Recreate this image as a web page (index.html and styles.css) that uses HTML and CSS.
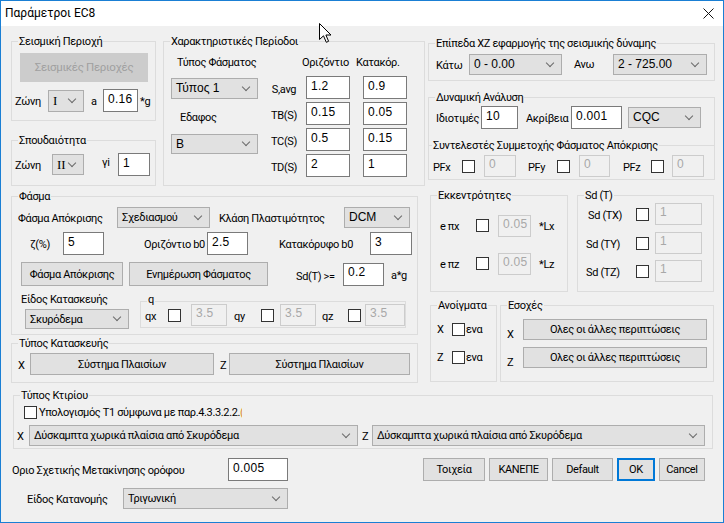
FILE: index.html
```html
<!DOCTYPE html>
<html lang="el">
<head>
<meta charset="utf-8">
<title>Παράμετροι EC8</title>
<link rel="stylesheet" href="styles.css">
</head>
<body>
<div class="win">
  <div class="titlebar">
    <span class="title">Παράμετροι EC8</span>
    <svg class="close" width="11" height="11" viewBox="0 0 11 11"><path d="M0.5 0.5L10.5 10.5M10.5 0.5L0.5 10.5" stroke="#111" stroke-width="1" fill="none"/></svg>
  </div>
  <div class="client">
    <div class="main">
      <div class="colL">
        <div class="rowTop">
          <div class="colA">
            <div class="grp g-seism">
              <span class="gt">Σεισμική Περιοχή</span>
              <div class="btn dis b-seism">Σεισμικές Περιοχές</div>
              <div class="row r-seism">
                <span class="lbl l-zoni">Ζώνη</span>
                <div class="cmb serif c-zoni1">I</div>
                <span class="lbl l-a">a</span>
                <div class="inp i-a">0.16</div>
                <span class="lbl l-g">*g</span>
              </div>
            </div>
            <div class="grp g-spoud">
              <span class="gt">Σπουδαιότητα</span>
              <div class="row r-spoud">
                <span class="lbl l-zoni2">Ζώνη</span>
                <div class="cmb serif c-zoni2">II</div>
                <span class="lbl l-gi">γi</span>
                <div class="inp i-gi">1</div>
              </div>
            </div>
          </div>
          <div class="grp g-char">
            <span class="gt">Χαρακτηριστικές Περίοδοι</span>
            <div class="char-left">
              <span class="lbl l-typf">Τύπος Φάσματος</span>
              <div class="cmb ms c-typ">Τύπος 1</div>
              <span class="lbl l-edaf">Εδαφος</span>
              <div class="cmb ms c-edaf">B</div>
            </div>
            <div class="char-right">
              <div class="char-head"><span class="h-or">Οριζόντιο</span><span class="h-kat">Κατακόρ.</span></div>
              <div class="char-row cr1"><span class="cl">S,avg</span><div class="inp ci1">1.2</div><div class="inp ci2">0.9</div></div>
              <div class="char-row"><span class="cl">TB(S)</span><div class="inp ci1">0.15</div><div class="inp ci2">0.05</div></div>
              <div class="char-row"><span class="cl">TC(S)</span><div class="inp ci1">0.5</div><div class="inp ci2">0.15</div></div>
              <div class="char-row"><span class="cl">TD(S)</span><div class="inp ci1">2</div><div class="inp ci2">1</div></div>
            </div>
          </div>
        </div>

        <div class="grp g-fasma">
          <span class="gt">Φάσμα</span>
          <div class="row f-r1">
            <span class="lbl l-fa">Φάσμα Απόκρισης</span>
            <div class="cmb c-sxed">Σχεδιασμού</div>
            <span class="lbl l-klasi">Κλάση Πλαστιμότητος</span>
            <div class="cmb ms c-dcm">DCM</div>
          </div>
          <div class="row f-r2">
            <span class="lbl l-zeta">ζ(%)</span>
            <div class="inp i-zeta">5</div>
            <span class="lbl l-orb">Οριζόντιο b0</span>
            <div class="inp i-orb">2.5</div>
            <span class="lbl l-katb">Κατακόρυφο b0</span>
            <div class="inp i-katb">3</div>
          </div>
          <div class="row f-r3">
            <div class="btn b-fa">Φάσμα Απόκρισης</div>
            <div class="btn b-enim">Ενημέρωση Φάσματος</div>
            <span class="lbl l-sd">Sd(T) &gt;=</span>
            <div class="inp i-sd">0.2</div>
            <span class="lbl l-ag">a*g</span>
          </div>
          <div class="f-r4">
            <div class="f-ek">
              <span class="lbl l-eidos">Είδος Κατασκευής</span>
              <div class="cmb c-skyr">Σκυρόδεμα</div>
            </div>
            <div class="grp g-q">
              <span class="gt gt-q">q</span>
              <div class="row q-row">
                <span class="lbl l-qx">qx</span>
                <span class="cb"></span>
                <div class="inp off i-q1">3.5</div>
                <span class="lbl l-qy">qy</span>
                <span class="cb"></span>
                <div class="inp off i-q2">3.5</div>
                <span class="lbl l-qz">qz</span>
                <span class="cb"></span>
                <div class="inp off i-q3">3.5</div>
              </div>
            </div>
          </div>
        </div>

        <div class="grp g-typkat">
          <span class="gt">Τύπος Κατασκευής</span>
          <div class="row tk-row">
            <span class="lbl l-tx">X</span>
            <div class="btn b-tk1">Σύστημα Πλαισίων</div>
            <span class="lbl l-tz">Z</span>
            <div class="btn b-tk2">Σύστημα Πλαισίων</div>
          </div>
        </div>
      </div>

      <div class="colR">
        <div class="grp g-epip">
          <span class="gt">Επίπεδα XZ εφαρμογής της σεισμικής δύναμης</span>
          <div class="row ep-row">
            <span class="lbl l-kato">Κάτω</span>
            <div class="cmb ms c-kato">0 - 0.00</div>
            <span class="lbl l-ano">Ανω</span>
            <div class="cmb ms c-ano">2 - 725.00</div>
          </div>
        </div>
        <div class="grp g-dyn">
          <span class="gt">Δυναμική Ανάλυση</span>
          <div class="row dy-r1">
            <span class="lbl l-idio">Ιδιοτιμές</span>
            <div class="inp i-idio">10</div>
            <span class="lbl l-akr">Ακρίβεια</span>
            <div class="inp i-akr">0.001</div>
            <div class="cmb ms c-cqc">CQC</div>
          </div>
          <div class="g-syn">
            <span class="gt gt-syn">Συντελεστές Συμμετοχής Φάσματος Απόκρισης</span>
            <div class="row pf-row">
              <span class="lbl l-pfx">PFx</span>
              <span class="cb"></span>
              <div class="inp off i-pf1">0</div>
              <span class="lbl l-pfy">PFy</span>
              <span class="cb"></span>
              <div class="inp off i-pf2">0</div>
              <span class="lbl l-pfz">PFz</span>
              <span class="cb"></span>
              <div class="inp off i-pf3">0</div>
            </div>
          </div>
        </div>

        <div class="rowEcc">
          <div class="grp g-ecc">
            <span class="gt">Εκκεντρότητες</span>
            <div class="row ec-r1">
              <span class="lbl l-ep">e πx</span>
              <span class="cb"></span>
              <div class="inp off i-ec">0.05</div>
              <span class="lbl l-lx">*Lx</span>
            </div>
            <div class="row ec-r2">
              <span class="lbl l-ep">e πz</span>
              <span class="cb"></span>
              <div class="inp off i-ec">0.05</div>
              <span class="lbl l-lx">*Lz</span>
            </div>
          </div>
          <div class="grp g-sd">
            <span class="gt">Sd (T)</span>
            <div class="row sd-r sd-r1">
              <span class="lbl l-sdt l-sdx">Sd (TX)</span>
              <span class="cb"></span>
              <div class="inp off i-sdt">1</div>
            </div>
            <div class="row sd-r sd-r2">
              <span class="lbl l-sdt">Sd (TY)</span>
              <span class="cb"></span>
              <div class="inp off i-sdt">1</div>
            </div>
            <div class="row sd-r sd-r3">
              <span class="lbl l-sdt">Sd (TZ)</span>
              <span class="cb"></span>
              <div class="inp off i-sdt">1</div>
            </div>
          </div>
        </div>

        <div class="rowAn">
          <div class="grp g-anoig">
            <span class="gt">Ανοίγματα</span>
            <div class="row an-r1">
              <span class="lbl l-an">X</span>
              <span class="cb"></span>
              <span class="lbl l-ena">ενα</span>
            </div>
            <div class="row an-r2">
              <span class="lbl l-an">Z</span>
              <span class="cb"></span>
              <span class="lbl l-ena">ενα</span>
            </div>
          </div>
          <div class="grp g-esox">
            <span class="gt">Εσοχές</span>
            <div class="row es-r1">
              <span class="lbl l-es">X</span>
              <div class="btn b-es">Ολες οι άλλες περιπτώσεις</div>
            </div>
            <div class="row es-r2">
              <span class="lbl l-es">Z</span>
              <div class="btn b-es">Ολες οι άλλες περιπτώσεις</div>
            </div>
          </div>
        </div>
      </div>
    </div>

    <div class="grp g-ktir">
      <span class="gt">Τύπος Κτιρίου</span>
      <div class="row kt-r1">
        <span class="cb cb-kt"></span>
        <span class="lbl l-t1">Υπολογισμός Τ1 σύμφωνα με παρ.4.3.3.2.2.<span class="clip">(</span></span>
      </div>
      <div class="row kt-r2">
        <span class="lbl l-kx">X</span>
        <div class="cmb c-kt1">Δύσκαμπτα χωρικά πλαίσια από Σκυρόδεμα</div>
        <span class="lbl l-kz">Z</span>
        <div class="cmb c-kt2">Δύσκαμπτα χωρικά πλαίσια από Σκυρόδεμα</div>
      </div>
    </div>

    <div class="bottom">
      <div class="bl">
        <div class="row bl-r1">
          <span class="lbl l-orio">Οριο Σχετικής Μετακίνησης ορόφου</span>
          <div class="inp i-orio">0.005</div>
        </div>
        <div class="row bl-r2">
          <span class="lbl l-katan">Είδος Κατανομής</span>
          <div class="cmb c-katan">Τριγωνική</div>
        </div>
      </div>
      <div class="btns">
        <div class="btn b-toix">Τοιχεία</div>
        <div class="btn b-kan">ΚΑΝΕΠΕ</div>
        <div class="btn b-def">Default</div>
        <div class="btn b-ok">OK</div>
        <div class="btn b-can">Cancel</div>
      </div>
    </div>
  </div>
  <svg class="cursor" width="14" height="21" viewBox="0 0 14 21"><path d="M0.5 0.5L0.5 16.5L4.5 12.8L7.3 19.3L9.6 18.3L6.9 12L12 12Z" fill="#fff" stroke="#000" stroke-width="1" stroke-linejoin="miter"/></svg>
</div>
</body>
</html>
```

FILE: styles.css
```css
* { box-sizing: border-box; margin: 0; padding: 0; }
body { margin: 0; background: #fff; font-family: Roboto, "Noto Sans", sans-serif; font-size: 11px; letter-spacing: -0.35px; line-height: 15px; color: #000; }

.win { position: relative; width: 724px; height: 523px; border: 1px solid #1a7fd4; background: #f0f0f0; overflow: hidden; }
.titlebar { height: 25px; background: #fff; display: flex; align-items: center; padding-left: 4px; }
.title { font-size: 12px; letter-spacing: 0; color: #000; }
.close { margin-left: auto; margin-right: 9px; }
.client { height: 496px; }
.cursor { position: absolute; left: 318px; top: 22px; }

/* generic controls */
.row { display: flex; align-items: center; }
.row > *, .char-left > *, .char-right > * { flex: none; }
.lbl { white-space: nowrap; padding-top: 2px; }
.grp { position: relative; border: 1px solid #dcdcdc; flex: none; }
.gt { position: absolute; top: -8px; left: 6px; padding: 0 1px; background: #f0f0f0; white-space: nowrap; line-height: 15px; }
.btn { display: flex; align-items: center; justify-content: center; border: 1px solid #adadad; background: #e1e1e1; white-space: nowrap; flex: none; }
.btn.dis { background: #cccccc; border-color: #cccccc; color: #a0a0a0; }
.cmb { display: flex; align-items: center; height: 21px; border: 1px solid #adadad; background: #e1e1e1; padding-left: 4px; white-space: nowrap; flex: none; }
.cmb::after { content: ""; flex: none; width: 5px; height: 5px; border-right: 1px solid #6a6a6a; border-bottom: 1px solid #6a6a6a; transform: rotate(45deg); margin: -4px 8px 0 auto; }
.ms { font-family: "Liberation Sans", Arial, sans-serif; font-size: 12px; letter-spacing: 0; }
.serif { font-family: "Liberation Serif", serif; font-size: 13px; letter-spacing: 0; }
.inp { display: flex; align-items: center; height: 23px; border: 1px solid #7a7a7a; background: #fff; padding: 0 0 3px 4px; font-family: "Liberation Sans", Arial, sans-serif; font-size: 12px; letter-spacing: 0.3px; flex: none; }
.inp.off { border-color: #cccccc; background: #f0f0f0; color: #a8a8a8; height: 22px; }
.cb { display: block; width: 13px; height: 13px; border: 1px solid #333; background: #fff; flex: none; }

/* layout */
.main { display: flex; align-items: flex-start; }
.colL { margin: 15px 0 0 10px; width: 414px; }
.rowTop { display: flex; align-items: flex-start; }
.colA { width: 145px; }
.colR { margin: 17px 0 0 3px; width: 287px; }

/* Σεισμική Περιοχή */
.g-seism { width: 145px; height: 80px; }
.b-seism { width: 128px; height: 29px; margin: 11px 0 0 8px; font-size: 11.5px; }
.r-seism { margin-top: 7px; height: 23px; }
.l-zoni { margin-left: 3px; width: 33px; }
.c-zoni1 { width: 36px; height: 22px; }
.l-a { margin-left: 7px; width: 12px; }
.i-a { width: 35px; }
.l-g { margin-left: 2px; }

/* Σπουδαιότητα */
.g-spoud { width: 145px; height: 46px; margin-top: 19px; }
.r-spoud { margin-top: 12px; height: 23px; }
.l-zoni2 { margin-left: 3px; width: 37px; }
.c-zoni2 { width: 32px; }
.l-gi { margin-left: 18px; width: 16px; margin-top: -6px; }
.i-gi { width: 32px; }

/* Χαρακτηριστικές Περίοδοι */
.g-char { width: 262px; height: 145px; margin-left: 7px; display: flex; align-items: flex-start; }
.char-left { display: flex; flex-direction: column; margin-left: 7px; width: 87px; }
.l-typf { margin-top: 13px; padding: 0 0 0 6px; }
.c-typ { margin-top: 8px; }
.l-edaf { margin-top: 11px; padding: 0 0 0 9px; }
.c-edaf { margin-top: 9px; height: 20px; }
.char-right { display: flex; flex-direction: column; margin-left: 7px; width: 142px; }
.char-head { display: flex; margin-top: 13px; height: 15px; }
.h-or { margin-left: 37px; width: 54px; }
.char-row { display: flex; align-items: center; height: 23px; margin-top: 3px; }
.char-row.cr1 { margin-top: 6px; }
.cl { width: 38px; text-align: center; padding-top: 3px; white-space: nowrap; }
.ci1 { margin-left: 3px; width: 44px; }
.ci2 { margin-left: 13px; width: 44px; }

/* Φάσμα */
.g-fasma { width: 407px; height: 139px; margin-top: 10px; }
.f-r1 { margin-top: 10px; height: 21px; }
.l-fa { margin-left: 6px; width: 99px; }
.c-sxed { width: 93px; }
.l-klasi { margin-left: 9px; width: 125px; }
.c-dcm { width: 66px; }
.f-r2 { margin-top: 4px; height: 23px; }
.l-zeta { margin-left: 18px; width: 33px; }
.i-zeta { width: 41px; }
.l-orb { margin-left: 40px; width: 63px; }
.i-orb { width: 41px; }
.l-katb { margin-left: 31px; width: 91px; }
.i-katb { width: 42px; }
.f-r3 { margin-top: 7px; height: 24px; }
.b-fa { margin-left: 9px; width: 102px; height: 24px; }
.b-enim { margin-left: 6px; width: 139px; height: 24px; }
.l-sd { margin-left: 28px; width: 47px; padding-top: 4px; }
.i-sd { width: 41px; }
.l-ag { margin-left: 7px; }
.f-r4 { display: flex; align-items: flex-start; margin-top: 6px; }
.f-ek { display: flex; flex-direction: column; margin-left: 9px; width: 108px; }
.l-eidos { padding-top: 0; }
.c-skyr { margin: 2px 0 0 4px; height: 20px; width: 104px; }
.g-q { margin: 9px 0 0 11px; width: 266px; height: 27px; }
.gt-q { left: 6px; top: -10px; }
.q-row { margin-top: 2px; height: 22px; }
.l-qx { margin-left: 4px; width: 23px; }
.i-q1 { margin-left: 10px; width: 36px; }
.l-qy { margin-left: 7px; width: 27px; }
.i-q2 { margin-left: 6px; width: 36px; }
.l-qz { margin-left: 6px; width: 26px; }
.i-q3 { margin-left: 4px; width: 40px; }

/* Τύπος Κατασκευής */
.g-typkat { width: 407px; height: 40px; margin-top: 8px; }
.tk-row { margin-top: 9px; height: 22px; }
.l-tx { margin-left: 6px; width: 12px; }
.b-tk1 { width: 184px; height: 22px; }
.l-tz { margin-left: 6px; width: 9px; }
.b-tk2 { width: 181px; height: 22px; }

/* Επίπεδα */
.g-epip { width: 287px; height: 38px; }
.ep-row { margin-top: 10px; height: 21px; }
.l-kato { margin-left: 7px; width: 33px; }
.c-kato { width: 93px; }
.l-ano { margin-left: 12px; width: 39px; padding-top: 0; }
.c-ano { width: 94px; }

/* Δυναμική */
.g-dyn { width: 287px; height: 83px; margin-top: 16px; }
.dy-r1 { margin-top: 8px; height: 23px; }
.l-idio { margin-left: 7px; width: 45px; }
.i-idio { width: 37px; }
.l-akr { margin-left: 8px; width: 45px; }
.i-akr { width: 51px; }
.c-cqc { margin-left: 6px; width: 73px; }
.g-syn { position: relative; border-top: 1px solid #dcdcdc; margin-top: 16px; }
.gt-syn { left: 3px; }
.pf-row { margin-top: 9px; height: 22px; }
.l-pfx { margin-left: 4px; width: 29px; }
.i-pf1 { margin-left: 9px; width: 32px; }
.l-pfy { margin-left: 12px; width: 29px; }
.i-pf2 { margin-left: 9px; width: 31px; }
.l-pfz { margin-left: 13px; width: 28px; }
.i-pf3 { margin-left: 8px; width: 32px; }

/* Εκκεντρότητες / Sd */
.rowEcc { display: flex; align-items: flex-start; margin-top: 15px; }
.g-ecc { margin-left: 2px; width: 138px; height: 97px; }
.ec-r1 { margin-top: 18px; height: 23px; }
.ec-r2 { margin-top: 15px; height: 23px; }
.l-ep { margin-left: 9px; width: 36px; }
.i-ec { margin-left: 9px; width: 33px; }
.l-lx { margin-left: 8px; }
.g-sd { margin-left: 9px; width: 137px; height: 97px; }
.sd-r { height: 22px; }
.sd-r1 { margin-top: 7px; }
.sd-r2 { margin-top: 7px; }
.sd-r3 { margin-top: 6px; }
.l-sdt { margin-left: 8px; width: 50px; }
.l-sdx { margin-left: 10px; width: 48px; }
.i-sdt { margin-left: 6px; width: 47px; }

/* Ανοίγματα / Εσοχές */
.rowAn { display: flex; align-items: flex-start; margin-top: 13px; }
.g-anoig { margin-left: 2px; width: 67px; height: 77px; }
.an-r1 { margin-top: 17px; height: 13px; }
.an-r2 { margin-top: 15px; height: 13px; }
.l-an { margin-left: 6px; width: 15px; padding-top: 0; }
.l-ena { margin-left: 1px; padding-top: 0; }
.g-esox { margin-left: 3px; width: 214px; height: 77px; }
.es-r1 { margin-top: 13px; height: 21px; }
.es-r2 { margin-top: 7px; height: 21px; }
.l-es { margin-left: 6px; width: 16px; padding-top: 9px; }
.b-es { width: 184px; height: 21px; }

/* Τύπος Κτιρίου */
.g-ktir { margin: 12px 0 0 12px; width: 700px; height: 54px; }
.kt-r1 { margin-top: 10px; height: 13px; }
.cb-kt { margin-left: 10px; }
.l-t1 { margin-left: 2px; padding-top: 0; }
.clip { display: inline-block; width: 2px; overflow: hidden; vertical-align: top; color: #d98a2a; }
.kt-r2 { margin-top: 6px; height: 21px; }
.l-kx { margin-left: 3px; width: 12px; }
.c-kt1 { width: 329px; }
.l-kz { margin-left: 4px; width: 10px; }
.c-kt2 { width: 333px; }

/* Bottom */
.bottom { display: flex; align-items: flex-start; margin-top: 9px; }
.bl { width: 300px; }
.bl-r1 { height: 23px; }
.l-orio { margin-left: 11px; width: 216px; }
.i-orio { width: 60px; }
.bl-r2 { margin-top: 7px; height: 21px; }
.l-katan { margin-left: 26px; width: 96px; }
.c-katan { width: 165px; }
.btns { display: flex; margin-left: 122px; }
.btns .btn { height: 23px; }
.b-toix { width: 62px; }
.b-kan { margin-left: 4px; width: 59px; }
.b-def { margin-left: 4px; width: 61px; }
.b-ok { margin-left: 4px; width: 38px; border-color: #0078d7; box-shadow: inset 0 0 0 1px #0078d7; }
.b-can { margin-left: 4px; width: 46px; }
```
